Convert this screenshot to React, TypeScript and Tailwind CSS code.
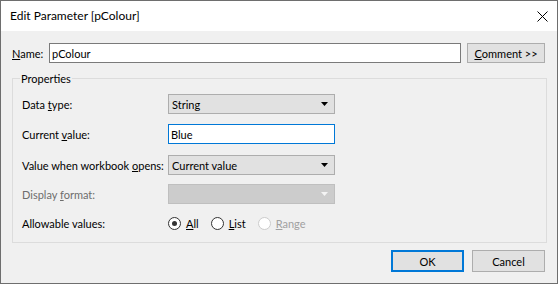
function Caret({ disabled = false }: { disabled?: boolean }) {
  return (
    <svg width="8" height="5" viewBox="0 0 8 5" className="mr-[5px]">
      <path d="M0 0H7L3.5 4Z" fill={disabled ? "#f4f4f4" : "#000"} />
    </svg>
  );
}

function Select({ value, disabled = false }: { value?: string; disabled?: boolean }) {
  return (
    <div
      className={
        disabled
          ? "flex h-[20px] w-[167px] shrink-0 items-center justify-between border border-[#bfbfbf] bg-[#cccccc] pl-[3px]"
          : "flex h-[20px] w-[167px] shrink-0 items-center justify-between border border-[#adadad] bg-[#e1e1e1] pl-[3px]"
      }
    >
      <span>{value}</span>
      <Caret disabled={disabled} />
    </div>
  );
}

function Radio({ label, hot, checked = false, disabled = false }: { label: string; hot: string; checked?: boolean; disabled?: boolean }) {
  return (
    <div className={disabled ? "flex items-center gap-[5px] text-[#a0a0a0]" : "flex items-center gap-[5px]"}>
      <span
        className={
          disabled
            ? "flex h-[13px] w-[13px] items-center justify-center rounded-full border border-[#cccccc] bg-white"
            : "flex h-[13px] w-[13px] items-center justify-center rounded-full border border-[#333333] bg-white"
        }
      >
        {checked && <span className="h-[5px] w-[5px] rounded-full bg-[#333333]" />}
      </span>
      <span>
        <u>{hot}</u>
        {label.slice(hot.length)}
      </span>
    </div>
  );
}

export default function App() {
  return (
    <div className="flex h-[284px] w-[558px] flex-col border border-[#6e6e6e] bg-[#f0f0f0] font-['Lato',sans-serif] text-[11px] leading-none whitespace-nowrap text-black">
      <div className="flex h-[30px] items-center justify-between bg-white pl-[9px] pr-[9px]">
        <span className="text-[12px]">Edit Parameter [pColour]</span>
        <svg width="11" height="11" viewBox="0 0 11 11">
          <path d="M0.5 0.5L10.5 10.5M10.5 0.5L0.5 10.5" stroke="#000" strokeWidth="1" />
        </svg>
      </div>

      <div className="flex flex-1 flex-col px-[11px]">
        <div className="mt-[12px] flex h-[20px] items-center">
          <span className="w-[37px] shrink-0">
            <u>N</u>ame:
          </span>
          <div className="flex h-[20px] w-[412px] shrink-0 items-center border border-[#7a7a7a] bg-white pl-[2px]">pColour</div>
          <div className="ml-[6px] flex h-[20px] w-[78px] shrink-0 items-center justify-center border border-[#adadad] bg-[#e1e1e1]">
            <u>C</u>omment &gt;&gt;
          </div>
        </div>

        <div className="relative mt-[15px] flex h-[165px] w-[535px] flex-col border border-[#dcdcdc] pl-[9px] pt-[15px]">
          <span className="absolute left-[7px] top-[-6px] bg-[#f0f0f0] px-[1px]">Properties</span>

          <div className="flex h-[20px] items-center">
            <span className="w-[146px] shrink-0">
              Data <u>t</u>ype:
            </span>
            <Select value="String" />
          </div>

          <div className="mt-[10px] flex h-[20px] items-center">
            <span className="w-[146px] shrink-0">
              Current <u>v</u>alue:
            </span>
            <div className="flex h-[20px] w-[167px] shrink-0 items-center border border-[#0078d7] bg-white pl-[2px]">Blue</div>
          </div>

          <div className="mt-[11px] flex h-[20px] items-center">
            <span className="w-[146px] shrink-0">
              Value when workbook <u>o</u>pens:
            </span>
            <Select value="Current value" />
          </div>

          <div className="mt-[9px] flex h-[20px] items-center text-[#6d6d6d]">
            <span className="w-[146px] shrink-0">
              Display <u>f</u>ormat:
            </span>
            <Select disabled />
          </div>

          <div className="mt-[9px] flex h-[20px] items-center">
            <span className="w-[146px] shrink-0">Allowable values:</span>
            <div className="flex items-center gap-[12px]">
              <Radio label="All" hot="A" checked />
              <Radio label="List" hot="L" />
              <Radio label="Range" hot="R" disabled />
            </div>
          </div>
        </div>

        <div className="mt-[7px] flex justify-end gap-[8px] pr-[1px]">
          <div className="flex h-[22px] w-[73px] items-center justify-center border-2 border-[#0078d7] bg-[#e1e1e1]">OK</div>
          <div className="flex h-[22px] w-[73px] items-center justify-center border border-[#adadad] bg-[#e1e1e1]">Cancel</div>
        </div>
      </div>
    </div>
  );
}
